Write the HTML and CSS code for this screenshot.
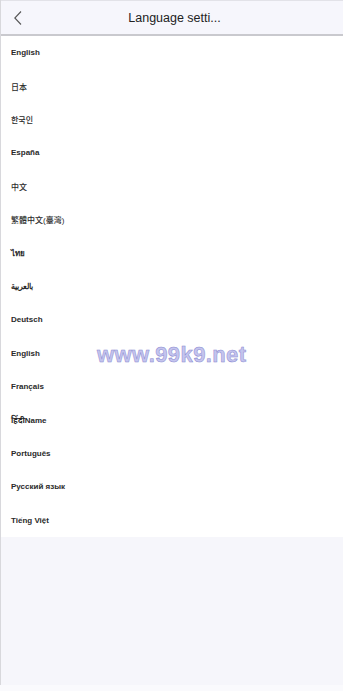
FILE: index.html
```html
<!DOCTYPE html>
<html>
<head>
<meta charset="utf-8">
<link rel="stylesheet" href="styles.css">
</head>
<body>
<div class="page">
  <header class="bar">
    <span class="back">
      <svg width="10" height="16" viewBox="0 0 10 16"><path d="M8 1.5 L1.8 8 L8 14.5" fill="none" stroke="#555" stroke-width="1.1"/></svg>
    </span>
    <h1 class="title">Language setti...</h1>
  </header>
  <ul class="list">
    <li>English</li>
    <li class="cjk">日本</li>
    <li class="cjk">한국인</li>
    <li>España</li>
    <li class="cjk">中文</li>
    <li class="cjk">繁體中文(臺灣)</li>
    <li>ไทย</li>
    <li>بالعربية</li>
    <li>Deutsch</li>
    <li>English</li>
    <li>Français</li>
    <li>हिंदीName</li>
    <li>Português</li>
    <li>Русский язык</li>
    <li>Tiếng Việt</li>
  </ul>
  <div class="mark">www.99k9.net</div>
</div>
</body>
</html>
```
FILE: styles.css
```css
html, body {
  margin: 0;
  padding: 0;
}
body {
  background: #fafafd;
  font-family: "Liberation Sans", "Noto Sans CJK SC", "Noto Sans", sans-serif;
  width: 343px;
  height: 691px;
  overflow: hidden;
}
.page {
  position: relative;
  height: 685px;
  background: #f6f6fb;
  border-left: 1px solid #d8d8dc;
  box-sizing: border-box;
}
.bar {
  position: relative;
  height: 33px;
  border-top: 1px solid #e2e2e8;
  border-bottom: 2px solid #c9c9ce;
  background: #f6f6fc;
  display: flex;
  align-items: center;
  justify-content: center;
}
.back {
  position: absolute;
  left: 12px;
  top: 9px;
  display: flex;
}
.title {
  margin: 0;
  font-size: 12.5px;
  font-weight: normal;
  color: #222;
  padding-left: 5px;
}
.list {
  list-style: none;
  margin: 0;
  padding: 0;
  background: #fff;
}
.list li {
  height: 33.4px;
  display: flex;
  align-items: center;
  padding-left: 10px;
  font-size: 8px;
  font-weight: bold;
  color: #2a2a2a;
}
.list li.cjk {
  font-weight: 500;
}
.mark {
  position: absolute;
  left: 96px;
  top: 342px;
  font-family: "Liberation Sans", sans-serif;
  font-weight: bold;
  font-size: 22px;
  letter-spacing: 0.4px;
  color: #c4c4ee;
  -webkit-text-stroke: 0.5px #8a8ad0;
}
```
